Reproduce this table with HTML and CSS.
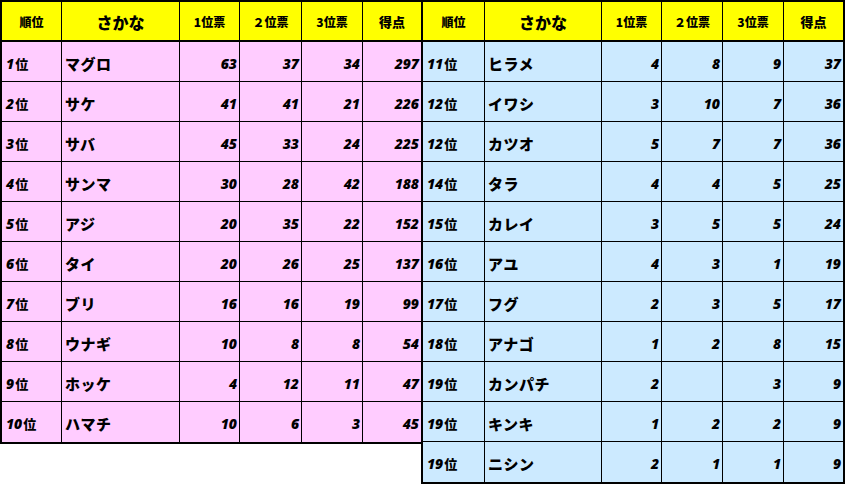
FILE: index.html
```html
<!DOCTYPE html>
<html lang="ja">
<head>
<meta charset="utf-8">
<link rel="stylesheet" href="styles.css">
</head>
<body>
<div class="page">
  <div class="tbl tbl-left">
    <div class="h">順位</div><div class="h h-name">さかな</div><div class="h">1位票</div><div class="h">２位票</div><div class="h">3位票</div><div class="h h-pt">得点</div>
    <div class="c rk"><span class="d">1</span>位</div><div class="c nm">マグロ</div><div class="c n">63</div><div class="c n">37</div><div class="c n">34</div><div class="c n">297</div>
    <div class="c rk"><span class="d">2</span>位</div><div class="c nm">サケ</div><div class="c n">41</div><div class="c n">41</div><div class="c n">21</div><div class="c n">226</div>
    <div class="c rk"><span class="d">3</span>位</div><div class="c nm">サバ</div><div class="c n">45</div><div class="c n">33</div><div class="c n">24</div><div class="c n">225</div>
    <div class="c rk"><span class="d">4</span>位</div><div class="c nm">サンマ</div><div class="c n">30</div><div class="c n">28</div><div class="c n">42</div><div class="c n">188</div>
    <div class="c rk"><span class="d">5</span>位</div><div class="c nm">アジ</div><div class="c n">20</div><div class="c n">35</div><div class="c n">22</div><div class="c n">152</div>
    <div class="c rk"><span class="d">6</span>位</div><div class="c nm">タイ</div><div class="c n">20</div><div class="c n">26</div><div class="c n">25</div><div class="c n">137</div>
    <div class="c rk"><span class="d">7</span>位</div><div class="c nm">ブリ</div><div class="c n">16</div><div class="c n">16</div><div class="c n">19</div><div class="c n">99</div>
    <div class="c rk"><span class="d">8</span>位</div><div class="c nm">ウナギ</div><div class="c n">10</div><div class="c n">8</div><div class="c n">8</div><div class="c n">54</div>
    <div class="c rk"><span class="d">9</span>位</div><div class="c nm">ホッケ</div><div class="c n">4</div><div class="c n">12</div><div class="c n">11</div><div class="c n">47</div>
    <div class="c rk last"><span class="d">10</span>位</div><div class="c nm last">ハマチ</div><div class="c n last">10</div><div class="c n last">6</div><div class="c n last">3</div><div class="c n last">45</div>
  </div>
  <div class="tbl tbl-right">
    <div class="h">順位</div><div class="h h-name">さかな</div><div class="h">1位票</div><div class="h">２位票</div><div class="h">3位票</div><div class="h h-pt">得点</div>
    <div class="c rk"><span class="d">11</span>位</div><div class="c nm">ヒラメ</div><div class="c n">4</div><div class="c n">8</div><div class="c n">9</div><div class="c n">37</div>
    <div class="c rk"><span class="d">12</span>位</div><div class="c nm">イワシ</div><div class="c n">3</div><div class="c n">10</div><div class="c n">7</div><div class="c n">36</div>
    <div class="c rk"><span class="d">12</span>位</div><div class="c nm">カツオ</div><div class="c n">5</div><div class="c n">7</div><div class="c n">7</div><div class="c n">36</div>
    <div class="c rk"><span class="d">14</span>位</div><div class="c nm">タラ</div><div class="c n">4</div><div class="c n">4</div><div class="c n">5</div><div class="c n">25</div>
    <div class="c rk"><span class="d">15</span>位</div><div class="c nm">カレイ</div><div class="c n">3</div><div class="c n">5</div><div class="c n">5</div><div class="c n">24</div>
    <div class="c rk"><span class="d">16</span>位</div><div class="c nm">アユ</div><div class="c n">4</div><div class="c n">3</div><div class="c n">1</div><div class="c n">19</div>
    <div class="c rk"><span class="d">17</span>位</div><div class="c nm">フグ</div><div class="c n">2</div><div class="c n">3</div><div class="c n">5</div><div class="c n">17</div>
    <div class="c rk"><span class="d">18</span>位</div><div class="c nm">アナゴ</div><div class="c n">1</div><div class="c n">2</div><div class="c n">8</div><div class="c n">15</div>
    <div class="c rk"><span class="d">19</span>位</div><div class="c nm">カンパチ</div><div class="c n">2</div><div class="c n"></div><div class="c n">3</div><div class="c n">9</div>
    <div class="c rk"><span class="d">19</span>位</div><div class="c nm">キンキ</div><div class="c n">1</div><div class="c n">2</div><div class="c n">2</div><div class="c n">9</div>
    <div class="c rk last"><span class="d">19</span>位</div><div class="c nm last">ニシン</div><div class="c n last">2</div><div class="c n last">1</div><div class="c n last">1</div><div class="c n last">9</div>
  </div>
</div>
</body>
</html>
```
FILE: styles.css
```css
* { box-sizing: border-box; }
html, body { margin: 0; padding: 0; background: #fff; }
body {
  font-family: "Noto Sans CJK JP", "Noto Sans", sans-serif;
  font-weight: 900;
  color: #000;
}
.page {
  display: flex;
  align-items: flex-start;
  width: 848px;
  height: 485px;
}
.tbl {
  display: grid;
  grid-auto-rows: 40px;
  border: 2px solid #000;
}
.tbl-left {
  grid-template-columns: 60px 118px 60px 62px 61px 58px;
  background: #ffccff;
}
.tbl-right {
  grid-template-columns: 62px 117px 60px 61px 61px 59px;
  background: #cceaff;
  margin-left: -2px;
}
.h, .c {
  display: flex;
  align-items: center;
  border-right: 1px solid #000;
  border-bottom: 1px solid #000;
  white-space: nowrap;
  overflow: hidden;
}
.h:nth-child(6n), .c:nth-child(6n) { border-right: none; }
.h {
  background: #ffff00;
  justify-content: center;
  font-size: 12px;
  border-bottom-width: 2px;
  padding-top: 1px;
}
.h-name { font-size: 16px; }
.h-pt { font-size: 13px; }
.c { font-size: 15px; padding-top: 3px; }
.last { border-bottom: none; }
.rk { padding-left: 4px; font-size: 13px; }
.nm { padding-left: 3px; font-size: 15px; letter-spacing: 0.5px; }
.n {
  justify-content: flex-end;
  padding-right: 2px;
  font-family: "Open Sans", "Noto Sans", sans-serif;
  font-weight: 800;
  font-style: italic;
  font-size: 14px;
}
.d {
  font-family: "Open Sans", "Noto Sans", sans-serif;
  font-weight: 800;
  font-style: italic;
  font-size: 14px;
  margin-right: 1px;
}
```
